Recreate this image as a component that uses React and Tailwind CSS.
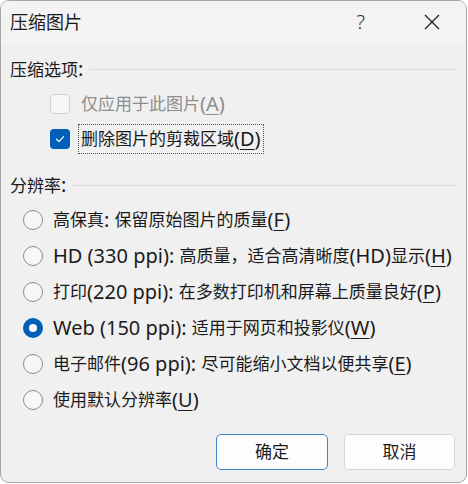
const font = { fontFamily: '"Noto Sans", "Noto Sans CJK SC", sans-serif' };

const Mixed = ({ text }) =>
  text.split(/([\x20-\x7E]+)/).map((part, i) =>
    /[\x20-\x7E]/.test(part) ? (
      <span key={i} className="text-[20px] whitespace-pre">
        {part}
      </span>
    ) : (
      <span key={i}>{part}</span>
    )
  );

const Key = ({ k }) => (
  <span className="text-[20px]">
    (<span className="underline underline-offset-[3px] decoration-1">{k}</span>)
  </span>
);

const SectionHeader = ({ label, className }) => (
  <div className={`flex h-[24px] items-center ${className}`}>
    <span className="pl-[9px] pr-[6px] text-[17px] text-[#1b1b1b]">
      <Mixed text={label} />
    </span>
    <div className="mr-[10px] h-px flex-1 bg-[#dcdcdc]" />
  </div>
);

const Checkbox = ({ checked, disabled }) => {
  if (checked) {
    return (
      <div className="flex size-[20px] items-center justify-center rounded-[4px] bg-[#005fb8]">
        <svg width="12" height="12" viewBox="0 0 12 12" fill="none">
          <path d="M2.5 6.2 L5 8.6 L9.6 3.6" stroke="white" strokeWidth="1.2" strokeLinecap="round" strokeLinejoin="round" />
        </svg>
      </div>
    );
  }
  return (
    <div
      className={`size-[20px] rounded-[4px] border ${
        disabled ? "border-[#d2d2d2] bg-[#f7f7f7]" : "border-[#8a8a8a] bg-white"
      }`}
    />
  );
};

const Radio = ({ selected }) =>
  selected ? (
    <div className="flex size-[20px] items-center justify-center rounded-full bg-[#005fb8]">
      <div className="size-[8px] rounded-full bg-white" />
    </div>
  ) : (
    <div className="size-[20px] rounded-full border border-[#8b8b8b] bg-[#f7f7f7]" />
  );

const resolutions = [
  { text: "高保真: 保留原始图片的质量", key: "F" },
  { text: "HD (330 ppi): 高质量，适合高清晰度(HD)显示", key: "H" },
  { text: "打印(220 ppi): 在多数打印机和屏幕上质量良好", key: "P" },
  { text: "Web (150 ppi): 适用于网页和投影仪", key: "W", selected: true },
  { text: "电子邮件(96 ppi): 尽可能缩小文档以便共享", key: "E" },
  { text: "使用默认分辨率", key: "U" },
];

export default function App() {
  return (
    <div className="h-[484px] w-[468px] bg-white" style={font}>
      <div className="flex h-[483px] w-[467px] flex-col overflow-hidden rounded-[9px] border border-[#a6a6a6] bg-[#f0f0f0]">
        {/* title bar */}
        <div className="flex h-[42px] shrink-0 items-center bg-[#f3f3f3]">
          <span className="pl-[9px] text-[18px] text-[#1b1b1b]">压缩图片</span>
          <span className="ml-auto mr-[59px] text-[20px] font-light text-[#333]">?</span>
          <svg className="mr-[26px]" width="16" height="16" viewBox="0 0 16 16">
            <path d="M1 1 L15 15 M15 1 L1 15" stroke="#222" strokeWidth="1.3" />
          </svg>
        </div>

        <div className="flex flex-col pt-[14px]">
          <SectionHeader label="压缩选项:" />

          <div className="mt-[5px] flex flex-col">
            <div className="flex h-[35px] items-center pl-[49px]">
              <Checkbox disabled />
              <span className="ml-[11px] flex h-[28px] items-center text-[17px] text-[#8d8d8d]">
                仅应用于此图片<Key k="A" />
              </span>
            </div>
            <div className="flex h-[35px] items-center pl-[49px]">
              <Checkbox checked />
              <span className="ml-[8px] flex h-[30px] items-center border border-dotted border-[#555] px-[2px] text-[17px] text-[#1b1b1b]">
                删除图片的剪裁区域<Key k="D" />
              </span>
            </div>
          </div>

          <SectionHeader label="分辨率:" className="mt-[17px]" />

          <div className="mt-[5px] flex flex-col">
            {resolutions.map((r) => (
              <div key={r.key} className="flex h-[36px] items-center pl-[22px]">
                <Radio selected={r.selected} />
                <span className="ml-[10px] flex items-center whitespace-nowrap text-[17px] text-[#1b1b1b]">
                  <Mixed text={r.text} />
                  <Key k={r.key} />
                </span>
              </div>
            ))}
          </div>

          <div className="mt-[16px] flex justify-end gap-[16px] pr-[11px]">
            <button className="h-[36px] w-[112px] rounded-[5px] border border-[#3a86c8] bg-[#fdfdfd] text-[17px] text-[#1b1b1b]">
              确定
            </button>
            <button className="h-[36px] w-[111px] rounded-[5px] border border-[#d4d4d4] bg-[#fdfdfd] text-[17px] text-[#1b1b1b]">
              取消
            </button>
          </div>
        </div>
      </div>
    </div>
  );
}
